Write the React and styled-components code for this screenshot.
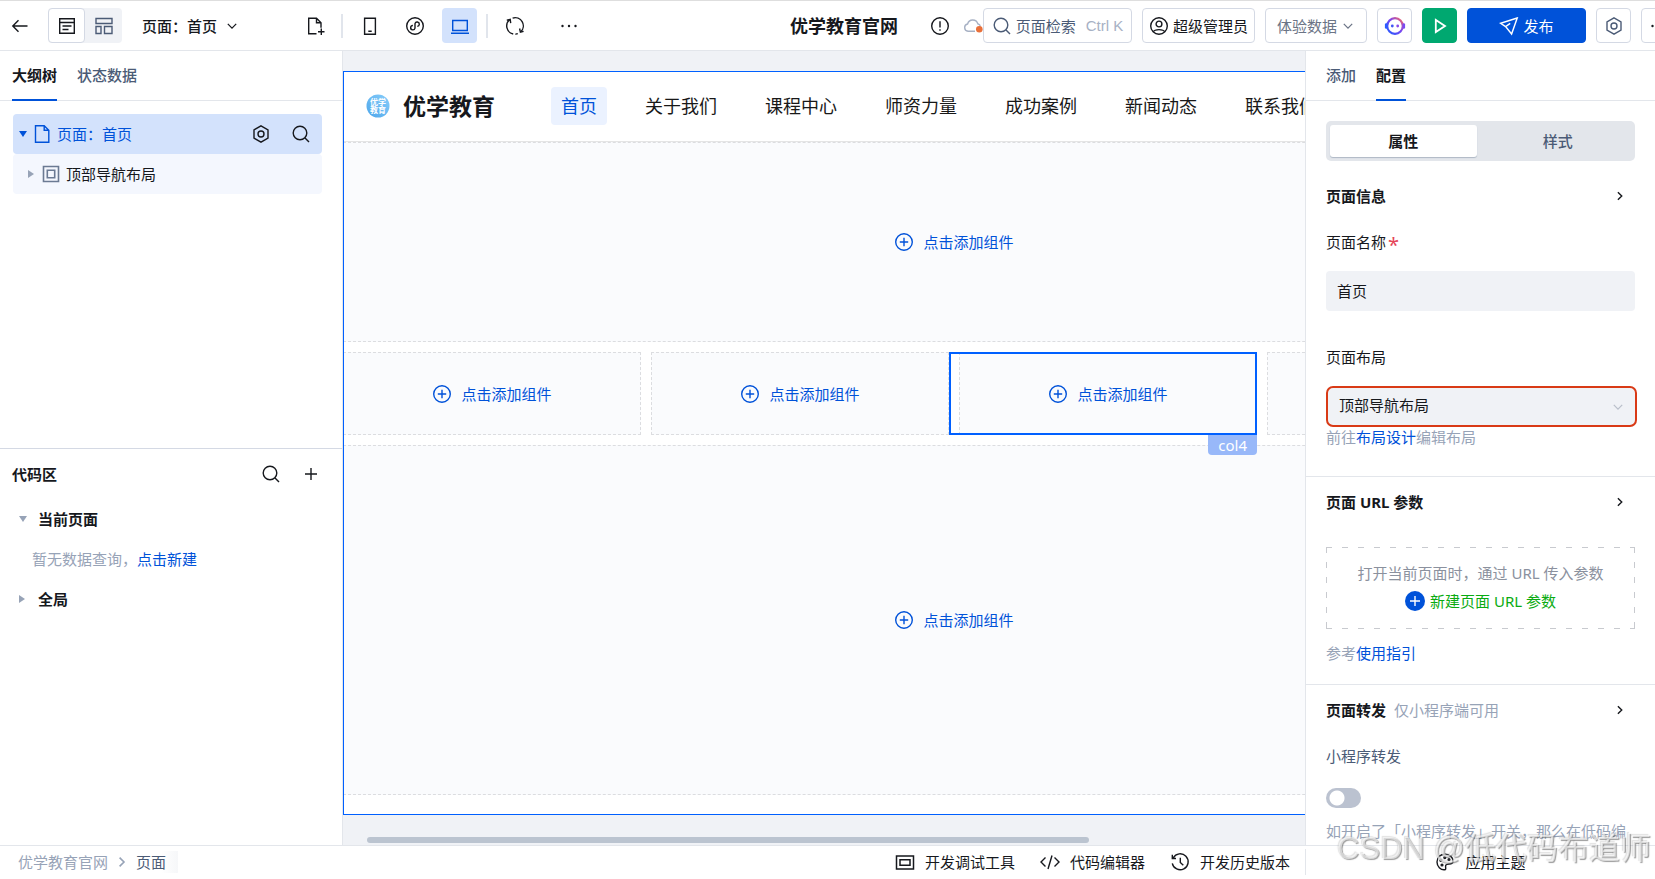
import React from "react";
import styled, { createGlobalStyle } from "styled-components";

const blue = "#0052d9";
const ink = "#16181d";
const slate = "#4b5b76";
const muted = "#97a3b7";
const line = "#e3e6eb";
const pale = "#f0f2f6";

const GlobalStyle = createGlobalStyle`
  * {
    box-sizing: border-box;
  }
  body {
    margin: 0;
    color: ${ink};
    font: 15px/20px "Noto Sans", "Noto Sans CJK SC", sans-serif;
    overflow: hidden;
  }
  button, input, select {
    font: inherit;
    color: inherit;
    margin: 0;
  }
  a {
    color: ${blue};
    text-decoration: none;
  }
  h1, h2, p {
    margin: 0;
    font-size: 15px;
  }
`;

const Page = styled.div`
  display: flex;
  flex-direction: column;
  height: 100vh;
  overflow: hidden;
  background: #fff;
`;

/* ---------- icons ---------- */

const Svg = styled.svg`
  display: block;
  flex: none;
  fill: none;
  stroke: currentColor;
  stroke-width: ${props => props.$weight || 1.4};
`;

const Icon = ({ size = 20, weight, children }) => (
  <Svg width={size} height={size} viewBox="0 0 20 20" $weight={weight} aria-hidden="true">
    {children}
  </Svg>
);

const BackIcon = () => <Icon><path d="M17.5 10H3M8.5 4.2L2.8 10l5.7 5.8" /></Icon>;
const ListIcon = () => <Icon><path d="M2.7 2.7h14.6v14.6H2.7zM2.7 6.5h14.6M5.5 10h9M5.5 13.5h6" /></Icon>;
const LayoutIcon = () => <Icon><path d="M2 2.5h16v5H2zM2 10.5h5v7H2zM10.5 10.5H18v7h-7.500z" /></Icon>;
const ChevronDown = ({ size = 14 }) => <Icon size={size} weight={1.8}><path d="M4 7l6 6 6-6" /></Icon>;
const ChevronRight = ({ size = 14 }) => <Icon size={size} weight={2}><path d="M7 4.500l5.500 5.500-5.500 5.500" /></Icon>;
const FileAddIcon = () => <Icon><path d="M10.500 17.700H2.700V2.300h7.800l4.500 4.500v5M10.500 2.300v4.500H15M15.300 12.500v6.500M12 15.800h6.500" /></Icon>;
const PhoneIcon = () => <Icon><path d="M4.600 2.300h10.800v15.900H4.600zM8.300 15.200h3.400" /></Icon>;
const MiniIcon = () => (
  <Icon>
    <circle cx="10" cy="10" r="8.300" />
    <path d="M7.900 9.500a2.200 2.200 0 1 0 2.100 2.700V7.600a2.200 2.200 0 1 1 2.300 2.800" />
  </Icon>
);
const LaptopIcon = () => <Icon><path d="M2.700 4.500h14.600v10H2.700zM1 17.200h18" /></Icon>;
const RefreshIcon = () => (
  <Icon>
    <path d="M4.800 3.600a8.200 8.200 0 0 0 3.400 14.400M7.600 2.100a8.200 8.200 0 0 1 8.200 13.700M10.400 18.200a8.200 8.200 0 0 0 2.400-.5" />
    <path d="M1.800 4.200l3.400-.8.500 3.700M18.600 15.400l-3.200.8-.8-3.700" />
  </Icon>
);
const DotsIcon = () => (
  <Icon>
    <g fill="currentColor" stroke="none">
      <circle cx="3.500" cy="10" r="1.200" /><circle cx="10" cy="10" r="1.200" /><circle cx="16.500" cy="10" r="1.200" />
    </g>
  </Icon>
);
const InfoIcon = () => <Icon><circle cx="10" cy="10" r="8.300" /><path d="M10 5.200v6.300M10 13.200v1.600" /></Icon>;
const SearchIcon = ({ size = 20 }) => <Icon size={size}><circle cx="9" cy="9" r="6.800" /><path d="M13.800 13.800l4.200 4.200" /></Icon>;
const UserIcon = () => (
  <Icon><circle cx="10" cy="10" r="8.300" /><circle cx="10" cy="8" r="2.900" /><path d="M4.300 15.800c1.400-2.900 10-2.900 11.400 0" /></Icon>
);
const HexIcon = () => <Icon><path d="M10 1.800l7 4v8.400l-7 4-7-4V5.800z" /><circle cx="10" cy="10" r="3" /></Icon>;
const CloudIcon = () => (
  <Svg width="20" height="20" viewBox="0 0 20 20" aria-hidden="true">
    <path d="M5 15.300a3.700 3.700 0 0 1-.4-7.300 5.300 5.300 0 0 1 10.200-.2c1.500.4 2.400 1.400 2.600 2.700M5 15.300h7" stroke="#a7b1c4" />
    <circle cx="16.300" cy="13.200" r="3.300" fill="#e9703a" stroke="none" />
  </Svg>
);
const RobotIcon = () => (
  <Svg width="22" height="22" viewBox="0 0 22 22" aria-hidden="true">
    <defs>
      <linearGradient id="robot" x1="0" y1="1" x2="1" y2="0">
        <stop offset="0" stopColor="#1f5bff" />
        <stop offset="0.550" stopColor="#7a45f0" />
        <stop offset="1" stopColor="#ff6a5c" />
      </linearGradient>
    </defs>
    <circle cx="11" cy="11" r="7.800" stroke="url(#robot)" strokeWidth="2.200" />
    <path d="M2.200 9.500v3" stroke="#2b5cff" strokeWidth="2.600" strokeLinecap="round" />
    <path d="M19.800 9.500v3" stroke="#7a4bf2" strokeWidth="2.600" strokeLinecap="round" />
    <circle cx="8.300" cy="11" r="1.400" fill="#3f55f5" stroke="none" />
    <circle cx="13.700" cy="11" r="1.400" fill="#8a4bea" stroke="none" />
  </Svg>
);
const PlayIcon = () => <Icon weight={1.8}><path d="M5.800 4v12l9.200-6z" /></Icon>;
const SendIcon = () => <Icon><path d="M18.200 2L1.600 7.300l5 3.300 6 7.400zM6.600 10.600l4.600-3.200" /></Icon>;
const FileIcon = () => <Icon><path d="M3.500 1.700h8.700l4.600 4.600v12H3.500zM12.200 1.700v4.600h4.600" /></Icon>;
const FrameIcon = () => <Icon weight={1.600}><path d="M2.500 2.500h15v15h-15zM6.300 6.300h7.400v7.400H6.300z" /></Icon>;
const PlusIcon = () => <Icon><path d="M10 4v12M4 10h12" /></Icon>;
const AddCircle = () => <Icon><circle cx="10" cy="10" r="8.300" /><path d="M10 5.800v8.400M5.800 10h8.400" /></Icon>;
const AddSolid = () => (
  <Svg width="20" height="20" viewBox="0 0 20 20" aria-hidden="true">
    <circle cx="10" cy="10" r="10" fill={blue} stroke="none" />
    <path d="M10 5v10M5 10h10" stroke="#fff" />
  </Svg>
);
const DebugIcon = () => <Icon weight={1.500}><path d="M1.500 4h17v13h-17zM5 7.700h10v5.600H5z" /></Icon>;
const CodeIcon = () => <Icon><path d="M5.500 5.500L1 10l4.500 4.500M14.500 5.500L19 10l-4.500 4.500M12 3.500L8 17" /></Icon>;
const HistoryIcon = () => <Icon><path d="M3.200 5.800a8 8 0 1 1-.9 5.500M2.300 2.800v3.700H6M10.300 5.800v4.700l3 2.800" /></Icon>;
const PaletteIcon = () => (
  <Icon>
    <path d="M10 2.200c-4.600 0-8 3.200-8 7.700 0 4.600 3.700 8.200 7.500 7.900 2.400-.3.400-3 1.300-4.600 1.500-2.200 7.200.5 7.200-4 0-4.200-3.700-7-8-7z" />
    <circle cx="5.800" cy="8.300" r=".9" /><circle cx="9.800" cy="5.600" r=".9" /><circle cx="14" cy="7.600" r=".9" /><circle cx="7" cy="13" r=".9" />
  </Icon>
);

const Caret = styled.span`
  flex: none;
  width: 0;
  height: 0;
  border: 4px solid transparent;
  ${props => props.$open
    ? "border-top: 6px solid currentColor; border-bottom: 0;"
    : "border-left: 6px solid currentColor; border-right: 0; margin-right: 2px;"}
  color: ${props => props.$active ? blue : muted};
`;

/* ---------- header ---------- */

const Header = styled.header`
  display: flex;
  align-items: center;
  flex: none;
  height: 51px;
  margin-right: -21px;
  padding: 1px 0 0 10px;
  border-bottom: 1px solid ${line};
  box-shadow: inset 0 1px #dedede;
`;

const IconButton = styled.button`
  display: flex;
  align-items: center;
  justify-content: center;
  flex: none;
  width: ${props => props.$width || 35}px;
  height: 35px;
  padding: 0;
  border: 0;
  border-radius: 4px;
  color: ${props => props.$active ? blue : "inherit"};
  background: ${props => props.$active ? "#d3e2fc" : "none"};
`;

const ViewSwitch = styled.div`
  display: flex;
  margin-left: 18px;
  border-radius: 4px;
  background: ${pale};
`;

const ViewButton = styled(IconButton)`
  width: 37px;
  border: 1px solid ${props => props.$on ? "#d4d9e4" : "transparent"};
  background: ${props => props.$on ? "#fff" : "none"};
  color: ${props => props.$on ? ink : slate};
`;

const PagePicker = styled.button`
  display: flex;
  align-items: center;
  gap: 8px;
  margin: 0 61px 0 20px;
  padding: 0;
  border: 0;
  background: none;
  font-weight: 500;
`;

const Rule = styled.span`
  width: 2px;
  height: 24px;
  margin: 0 9px;
  background: #e1e5ec;
`;

const Devices = styled.div`
  display: flex;
  gap: 10px;
`;

const Actions = styled.div`
  display: flex;
  align-items: center;
  gap: 10px;
  margin-left: auto;
`;

const Status = styled.div`
  display: flex;
  align-items: center;
  gap: 13px;
  margin-right: -10px;
`;

const SiteName = styled.h1`
  margin-right: 19px;
  font-size: 18px;
  font-weight: 700;
  white-space: nowrap;
`;

const HeaderButton = styled.button`
  display: flex;
  align-items: center;
  justify-content: center;
  gap: 4px;
  flex: none;
  width: ${props => props.$width || 35}px;
  height: 35px;
  padding: 0;
  border: 1px solid ${props => props.$fill || "#d4d9e4"};
  border-radius: 4px;
  background: ${props => props.$fill || "#fff"};
  color: ${props => props.$color || ink};
  white-space: nowrap;
`;

const Shortcut = styled.span`
  margin-left: 6px;
  color: #a7b1c4;
  font-family: "Liberation Sans", sans-serif;
`;

const TopBar = () => (
  <Header>
    <IconButton $width={20} aria-label="返回"><BackIcon /></IconButton>
    <ViewSwitch>
      <ViewButton $on aria-label="页面"><ListIcon /></ViewButton>
      <ViewButton aria-label="布局"><LayoutIcon /></ViewButton>
    </ViewSwitch>
    <PagePicker>页面：首页<ChevronDown /></PagePicker>
    <IconButton $width={32} aria-label="新建页面"><FileAddIcon /></IconButton>
    <Rule />
    <Devices>
      <IconButton aria-label="手机"><PhoneIcon /></IconButton>
      <IconButton aria-label="小程序"><MiniIcon /></IconButton>
      <IconButton $active aria-label="电脑"><LaptopIcon /></IconButton>
    </Devices>
    <Rule />
    <Devices>
      <IconButton aria-label="刷新"><RefreshIcon /></IconButton>
      <IconButton $width={54} aria-label="更多"><DotsIcon /></IconButton>
    </Devices>
    <Actions>
      <Status>
        <SiteName>优学教育官网</SiteName>
        <InfoIcon />
        <CloudIcon />
      </Status>
      <HeaderButton $width={149} $color={slate}>
        <SearchIcon />页面检索<Shortcut>Ctrl K</Shortcut>
      </HeaderButton>
      <HeaderButton $width={113}><UserIcon />超级管理员</HeaderButton>
      <HeaderButton $width={102} $color="#6b7486">体验数据<ChevronDown /></HeaderButton>
      <HeaderButton aria-label="助手"><RobotIcon /></HeaderButton>
      <HeaderButton $fill="#00a870" $color="#fff" aria-label="预览"><PlayIcon /></HeaderButton>
      <HeaderButton $width={119} $fill={blue} $color="#fff"><SendIcon />发布</HeaderButton>
      <HeaderButton $color={slate} aria-label="设置"><HexIcon /></HeaderButton>
      <HeaderButton aria-label="更多操作"><DotsIcon /></HeaderButton>
    </Actions>
  </Header>
);

/* ---------- left panel ---------- */

const Main = styled.main`
  display: flex;
  flex: 1;
  min-height: 0;
`;

const LeftPanel = styled.aside`
  display: flex;
  flex-direction: column;
  flex: none;
  width: 343px;
  border-right: 1px solid ${line};
`;

const Tabs = styled.div`
  display: flex;
  flex: none;
  gap: 20px;
  height: 50px;
  padding: 0 ${props => props.$inset || 12}px;
  border-bottom: 1px solid ${line};
`;

const Tab = styled.button`
  height: 50px;
  padding: 0 0 2px;
  border: 0;
  border-bottom: 2px solid ${props => props.$active ? blue : "transparent"};
  border-top: 2px solid transparent;
  background: none;
  color: ${props => props.$active ? ink : slate};
  font-weight: ${props => props.$active ? 700 : 500};
`;

const Tree = styled.div`
  flex: 1;
  padding: 13px 20px 0 13px;
`;

const TreeRow = styled.div`
  display: flex;
  align-items: center;
  gap: 5px;
  height: 40px;
  padding: 0 11px 0 ${props => props.$child ? 15 : 6}px;
  border-radius: 4px;
  color: ${props => props.$child ? ink : blue};
  background: ${props => props.$child ? "#f4f7fe" : "#d3e2fc"};
`;

const Tint = styled.span`
  color: #6b7a93;
`;

const RowActions = styled.div`
  display: flex;
  gap: 20px;
  margin-left: auto;
  color: ${ink};
`;

const CodeZone = styled.section`
  flex: none;
  height: 397px;
  padding: 0 21px 0 12px;
  border-top: 1px solid #d4d9e4;
`;

const ZoneHead = styled.div`
  display: flex;
  align-items: center;
  height: 50px;
  h2 {
    font-weight: 700;
  }
`;

const ZoneRow = styled.div`
  display: flex;
  align-items: center;
  gap: 11px;
  height: 40px;
  padding-left: ${props => props.$text ? 20 : 7}px;
  color: ${props => props.$text ? muted : ink};
  font-weight: ${props => props.$text ? 400 : 700};
`;

const Sidebar = () => (
  <LeftPanel>
    <Tabs>
      <Tab $active>大纲树</Tab>
      <Tab>状态数据</Tab>
    </Tabs>
    <Tree>
      <TreeRow>
        <Caret $open $active />
        <FileIcon />
        <span>页面：首页</span>
        <RowActions>
          <IconButton $width={20} aria-label="页面设置"><HexIcon /></IconButton>
          <IconButton $width={20} aria-label="搜索组件"><SearchIcon /></IconButton>
        </RowActions>
      </TreeRow>
      <TreeRow $child>
        <Caret />
        <Tint><FrameIcon /></Tint>
        <span>顶部导航布局</span>
      </TreeRow>
    </Tree>
    <CodeZone>
      <ZoneHead>
        <h2>代码区</h2>
        <RowActions>
          <IconButton $width={20} aria-label="搜索代码"><SearchIcon /></IconButton>
          <IconButton $width={20} aria-label="新建"><PlusIcon /></IconButton>
        </RowActions>
      </ZoneHead>
      <ZoneRow><Caret $open />当前页面</ZoneRow>
      <ZoneRow $text><span>暂无数据查询，<a href="#new">点击新建</a></span></ZoneRow>
      <ZoneRow><Caret />全局</ZoneRow>
    </CodeZone>
  </LeftPanel>
);

/* ---------- canvas ---------- */

const Canvas = styled.section`
  display: flex;
  flex-direction: column;
  flex: 1;
  min-width: 0;
  padding-top: 20px;
  overflow: hidden;
  background: ${pale};
`;

const Artboard = styled.div`
  flex: none;
  position: relative;
  width: 1222px;
  padding-bottom: 20px;
  background: #fff;
  /* frame sits above the slots so their own edges never show through */
  &::after {
    content: "";
    position: absolute;
    inset: 0;
    border: 1px solid #0060ff;
    pointer-events: none;
  }
`;

const SiteNav = styled.nav`
  display: flex;
  align-items: center;
  gap: 28px;
  height: 71px;
  padding-left: 23px;
  border-bottom: 1px solid #e5e5e5;
`;

const Brand = styled.div`
  display: flex;
  align-items: center;
  gap: 13px;
  margin-right: 28px;
  font-size: 23px;
  font-weight: 700;
`;

const NavLink = styled.a`
  padding: 9px 10px;
  border-radius: 4px;
  font-size: 18px;
  color: ${props => props.$active ? blue : "#181818"};
  background: ${props => props.$active ? "#ebf2ff" : "none"};
  white-space: nowrap;
`;

const Slot = styled.div`
  display: flex;
  flex: 1;
  align-items: center;
  justify-content: center;
  height: ${props => props.$height}px;
  border: 1px dashed #dcdde0;
  background: #fafbfd;
`;

const Columns = styled.div`
  display: flex;
  margin: 10px 0 10px -10px;
`;

const Column = styled.div`
  display: flex;
  position: relative;
  flex: 1;
  padding-left: 10px;
  ${props => props.$selected && "outline: 2px solid #0060ff; outline-offset: -2px;"}
`;

const ColumnTag = styled.span`
  position: absolute;
  top: 100%;
  right: 0;
  padding: 0 10px;
  border-radius: 0 0 4px 4px;
  background: #98b8f9;
  color: #fff;
`;

const AddButton = styled.button`
  display: flex;
  align-items: center;
  gap: 9px;
  padding: 0;
  border: 0;
  background: none;
  color: ${blue};
`;

const ScrollThumb = styled.div`
  width: 75%;
  height: 6px;
  margin: 22px 0 0 24px;
  border-radius: 3px;
  background: #bbc4d0;
`;

const AddSlot = ({ height }) => (
  <Slot $height={height}>
    <AddButton><AddCircle />点击添加组件</AddButton>
  </Slot>
);

const BrandLogo = () => (
  <svg width="24" height="24" viewBox="0 0 24 24" aria-hidden="true">
    <defs>
      <linearGradient id="brand" x1="0" y1="1" x2="1" y2="0">
        <stop offset="0" stopColor="#4ea6ea" />
        <stop offset="1" stopColor="#86cdfb" />
      </linearGradient>
    </defs>
    <circle cx="12" cy="12" r="11.500" fill="url(#brand)" />
    <g fill="#fff" fontSize="8" fontWeight="700" textAnchor="middle">
      <text x="12" y="11">优学</text>
      <text x="12" y="19">教育</text>
    </g>
  </svg>
);

const navItems = ["首页", "关于我们", "课程中心", "师资力量", "成功案例", "新闻动态", "联系我们"];
const columns = ["col1", "col2", "col4", "col3"];

const Stage = () => (
  <Canvas>
    <Artboard>
      <SiteNav>
        <Brand><BrandLogo />优学教育</Brand>
        {navItems.map((item, i) => (
          <NavLink key={item} href="#nav" $active={i === 0}>{item}</NavLink>
        ))}
      </SiteNav>
      <AddSlot height={200} />
      <Columns>
        {columns.map(name => (
          <Column key={name} $selected={name === "col4"}>
            <AddSlot height={83} />
            {name === "col4" && <ColumnTag>{name}</ColumnTag>}
          </Column>
        ))}
      </Columns>
      <AddSlot height={350} />
    </Artboard>
    <ScrollThumb />
  </Canvas>
);

/* ---------- right panel ---------- */

const RightPanel = styled.aside`
  flex: none;
  width: 350px;
  overflow: hidden;
  border-left: 1px solid ${line};
`;

const Segmented = styled.div`
  display: flex;
  gap: 8px;
  margin: 20px 20px 15px;
  padding: 4px;
  border-radius: 5px;
  background: ${line};
`;

const Segment = styled.button`
  flex: 1;
  height: 32px;
  padding: 0;
  border: 0;
  border-radius: 3px;
  font-weight: ${props => props.$active ? 700 : 500};
  color: ${props => props.$active ? ink : slate};
  background: ${props => props.$active ? "#fff" : "none"};
  box-shadow: ${props => props.$active ? "0 1px 1px #aeb7c5" : "none"};
`;

const Group = styled.section`
  display: flex;
  flex-direction: column;
  padding: ${props => props.$top || 0}px 20px ${props => props.$bottom || 0}px;
  border-bottom: 1px solid ${line};
  &:last-child {
    border-bottom: 0;
  }
`;

const GroupHead = styled.div`
  display: flex;
  align-items: center;
  gap: 8px;
  height: 40px;
  padding-right: 8px;
  h2 {
    font-weight: 700;
  }
  button {
    width: 14px;
    height: 20px;
    margin-left: auto;
  }
`;

const Label = styled.label`
  margin: ${props => props.$gap || 16}px 0 19px;
  color: ${props => props.$color || "inherit"};
`;

const Star = styled.span`
  margin-left: 2px;
  color: #e54558;
  font: 20px/10px "Noto Sans", sans-serif;
  vertical-align: -4px;
`;

const TextInput = styled.input`
  width: 100%;
  height: 40px;
  padding: 0 11px 2px;
  border: 0;
  border-radius: 4px;
  background: ${pale};
`;

const SelectBox = styled.div`
  display: flex;
  align-items: center;
  height: 41px;
  margin-right: -2px;
  padding-right: 10px;
  border: 2px solid #d93a16;
  border-radius: 7px;
  background: ${pale};
  color: #b9bfca;
  select {
    flex: 1;
    height: 37px;
    padding: 0 11px 4px;
    border: 0;
    background: none;
    color: ${ink};
    appearance: none;
  }
`;

const Hint = styled.p`
  color: ${props => props.$color || muted};
  white-space: nowrap;
`;

const ParamBox = styled.div`
  display: flex;
  flex-direction: column;
  align-items: center;
  gap: 8px;
  height: 82px;
  margin: 25px 0 14px;
  padding-top: 16px;
  /* long dashes, drawn one strip per side */
  background:
    repeating-linear-gradient(90deg, #c8cacf 0 6px, transparent 6px 16px) top / 100% 1px no-repeat,
    repeating-linear-gradient(90deg, #c8cacf 0 6px, transparent 6px 16px) bottom / 100% 1px no-repeat,
    repeating-linear-gradient(#c8cacf 0 6px, transparent 6px 15px) left / 1px 100% no-repeat,
    repeating-linear-gradient(#c8cacf 0 6px, transparent 6px 15px) right / 1px 100% no-repeat;
`;

const NewParam = styled.button`
  display: flex;
  align-items: center;
  gap: 5px;
  padding: 0;
  border: 0;
  background: none;
  color: #0aab11;
`;

const Switch = styled.input`
  appearance: none;
  width: 35px;
  height: 20px;
  margin: 3px 0 13px;
  border-radius: 10px;
  background: radial-gradient(circle at 11px 10px, #fff 7px, transparent 8px), #bbc2d0;
`;

const Config = () => (
  <RightPanel>
    <Tabs $inset={20}>
      <Tab>添加</Tab>
      <Tab $active>配置</Tab>
    </Tabs>
    <Segmented>
      <Segment $active>属性</Segment>
      <Segment>样式</Segment>
    </Segmented>
    <Group $bottom={29}>
      <GroupHead>
        <h2>页面信息</h2>
        <IconButton aria-label="展开页面信息"><ChevronRight /></IconButton>
      </GroupHead>
      <Label htmlFor="page-name">页面名称<Star>*</Star></Label>
      <TextInput id="page-name" defaultValue="首页" />
      <Label htmlFor="page-layout" $gap={36}>页面布局</Label>
      <SelectBox>
        <select id="page-layout" defaultValue="top">
          <option value="top">顶部导航布局</option>
        </select>
        <ChevronDown size={14} />
      </SelectBox>
      <Hint>前往<a href="#layout">布局设计</a>编辑布局</Hint>
    </Group>
    <Group $top={5} $bottom={21}>
      <GroupHead>
        <h2>页面 URL 参数</h2>
        <IconButton aria-label="展开页面 URL 参数"><ChevronRight /></IconButton>
      </GroupHead>
      <ParamBox>
        <Hint $color="#8b919e">打开当前页面时，通过 URL 传入参数</Hint>
        <NewParam><AddSolid />新建页面 URL 参数</NewParam>
      </ParamBox>
      <Hint>参考<a href="#guide">使用指引</a></Hint>
    </Group>
    <Group $top={5}>
      <GroupHead>
        <h2>页面转发</h2>
        <Hint>仅小程序端可用</Hint>
        <IconButton aria-label="展开页面转发"><ChevronRight /></IconButton>
      </GroupHead>
      <Label htmlFor="share" $color={slate}>小程序转发</Label>
      <Switch id="share" type="checkbox" />
      <Hint>如开启了「小程序转发」开关，那么在低码编</Hint>
    </Group>
  </RightPanel>
);

/* ---------- footer ---------- */

const Footer = styled.footer`
  display: flex;
  align-items: center;
  flex: none;
  height: 34px;
  padding: 0 0 2px 18px;
  border-top: 1px solid ${line};
`;

const Crumbs = styled.div`
  display: flex;
  align-items: center;
  gap: 6px;
  color: ${muted};
`;

const Current = styled.span`
  padding: 1px 12px 1px 0;
  color: ${slate};
  background: linear-gradient(90deg, #fff 60%, #f6f7f9);
`;

const Tools = styled.div`
  display: flex;
  gap: 25px;
  margin-left: auto;
  padding-right: 15px;
`;

const ThemeArea = styled.div`
  display: flex;
  justify-content: center;
  width: 350px;
  border-left: 1px solid ${line};
`;

const Tool = styled.button`
  display: flex;
  align-items: center;
  gap: 10px;
  height: 26px;
  padding: 0;
  border: 0;
  background: none;
`;

const Credit = styled.div`
  position: fixed;
  right: 4px;
  bottom: 10px;
  color: rgba(255, 255, 255, 0.6);
  font: 31px/40px "Liberation Sans", "Noto Sans CJK SC", sans-serif;
  text-shadow: 1px 1px 1px rgba(90, 90, 90, 0.6), -1px -1px 1px rgba(160, 160, 160, 0.3);
  white-space: nowrap;
  pointer-events: none;
`;

const StatusBar = () => (
  <Footer>
    <Crumbs>
      优学教育官网<ChevronRight size={16} /><Current>页面</Current>
    </Crumbs>
    <Tools>
      <Tool><DebugIcon />开发调试工具</Tool>
      <Tool><CodeIcon />代码编辑器</Tool>
      <Tool><HistoryIcon />开发历史版本</Tool>
    </Tools>
    <ThemeArea>
      <Tool><PaletteIcon />应用主题</Tool>
    </ThemeArea>
  </Footer>
);

const App = () => (
  <Page>
    <GlobalStyle />
    <TopBar />
    <Main>
      <Sidebar />
      <Stage />
      <Config />
    </Main>
    <StatusBar />
    <Credit>CSDN @低代码布道师</Credit>
  </Page>
);

export default App;
